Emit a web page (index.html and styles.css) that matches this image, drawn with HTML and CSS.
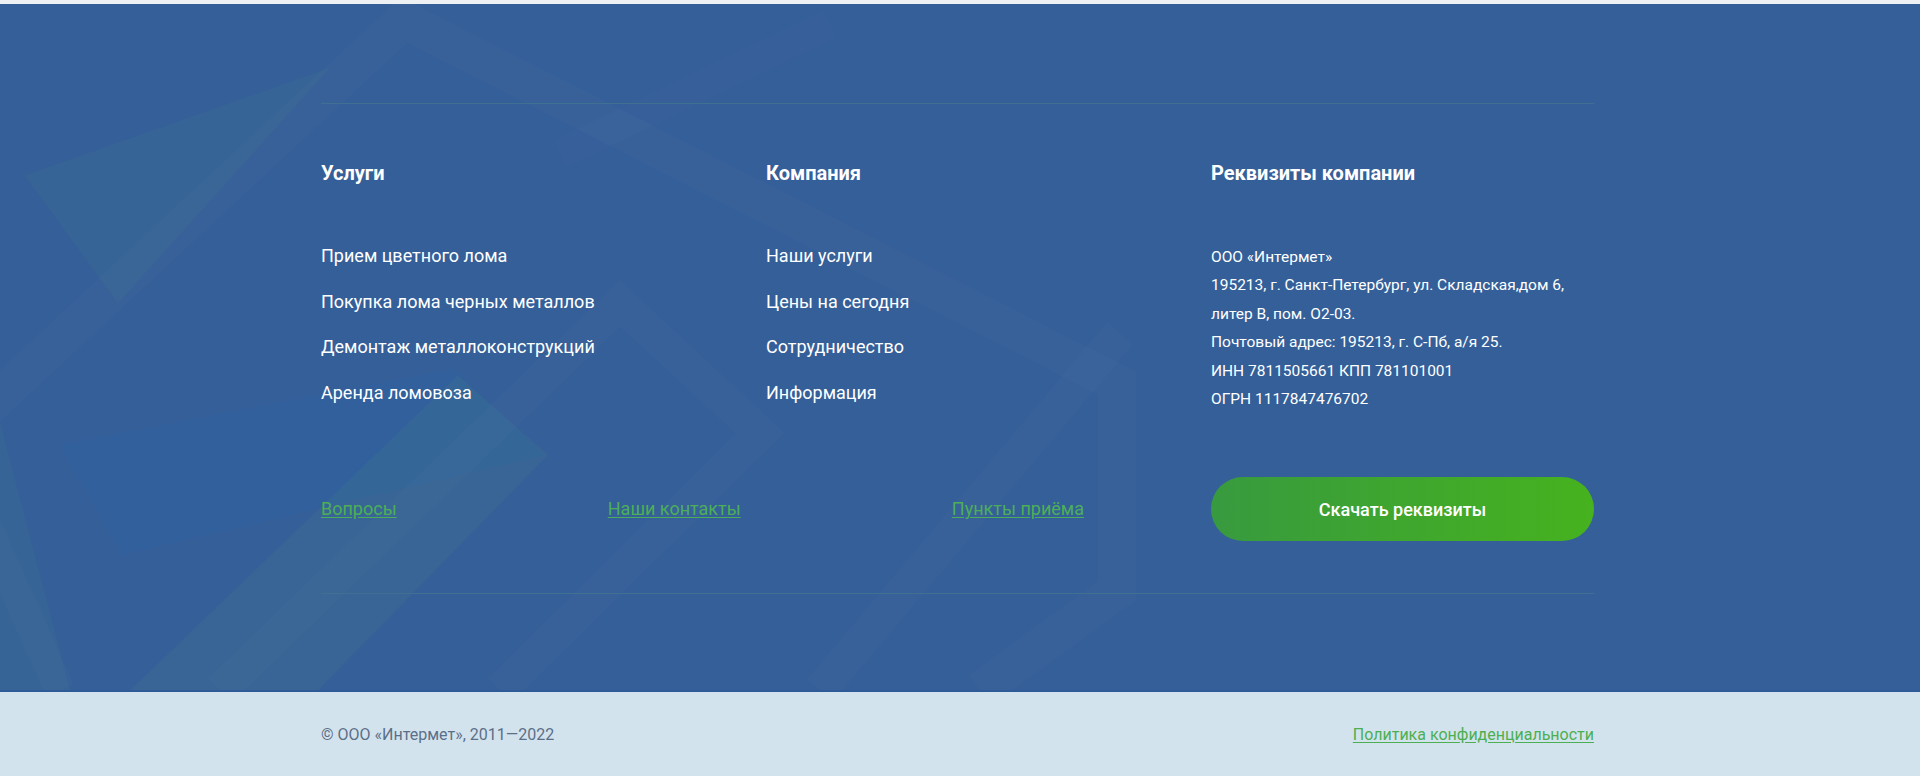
FILE: index.html
```html
<!DOCTYPE html>
<html lang="ru">
<head>
<meta charset="utf-8">
<title>Интермет — футер</title>
<link rel="stylesheet" href="styles.css">
</head>
<body>
<div class="top-strip"></div>
<footer class="footer">
  <div class="footer-main">
    <svg class="footer-bg" viewBox="0 0 1920 688" preserveAspectRatio="none" aria-hidden="true">
      <polygon points="0,688 0,420 70,688" fill="#3f7390" opacity="0.25"/>
      <polygon points="25,172 330,64 118,300" fill="#3f7a8c" opacity="0.2"/>
      <polygon points="60,442 452,366 545,452 122,552" fill="#2a64a8" opacity="0.3"/>
      <polygon points="130,688 318,688 548,452 458,372" fill="#3f7390" opacity="0.3"/>
      <polyline points="-40,430 404,16 1117,380 1117,588 980,688" fill="none" stroke="#ffffff" stroke-opacity="0.015" stroke-width="38"/>
      <polyline points="60,688 -60,420" fill="none" stroke="#ffffff" stroke-opacity="0.015" stroke-width="30"/>
      <polyline points="220,688 620,300 760,430 500,688" fill="none" stroke="#ffffff" stroke-opacity="0.015" stroke-width="34"/>
      <polyline points="820,688 1120,330" fill="none" stroke="#ffffff" stroke-opacity="0.015" stroke-width="34"/>
      <polyline points="560,150 830,20" fill="none" stroke="#ffffff" stroke-opacity="0.012" stroke-width="30"/>
    </svg>
    <div class="container">
      <div class="rule"></div>
      <div class="cols">
        <div class="col">
          <h3 class="col-title">Услуги</h3>
          <ul class="menu">
            <li><a href="#">Прием цветного лома</a></li>
            <li><a href="#">Покупка лома черных металлов</a></li>
            <li><a href="#">Демонтаж металлоконструкций</a></li>
            <li><a href="#">Аренда ломовоза</a></li>
          </ul>
        </div>
        <div class="col">
          <h3 class="col-title">Компания</h3>
          <ul class="menu">
            <li><a href="#">Наши услуги</a></li>
            <li><a href="#">Цены на сегодня</a></li>
            <li><a href="#">Сотрудничество</a></li>
            <li><a href="#">Информация</a></li>
          </ul>
        </div>
        <div class="col">
          <h3 class="col-title">Реквизиты компании</h3>
          <div class="req">
            <p>ООО «Интермет»</p>
            <p>195213, г. Санкт-Петербург, ул. Складская,дом 6,</p>
            <p>литер В, пом. О2-03.</p>
            <p>Почтовый адрес: 195213, г. С-Пб, а/я 25.</p>
            <p>ИНН 7811505661 КПП 781101001</p>
            <p>ОГРН 1117847476702</p>
          </div>
        </div>
      </div>
      <div class="actions">
        <nav class="quick-links">
          <a href="#">Вопросы</a>
          <a href="#">Наши контакты</a>
          <a href="#">Пункты приёма</a>
        </nav>
        <a class="btn" href="#">Скачать реквизиты</a>
      </div>
      <div class="rule"></div>
    </div>
  </div>
  <div class="footer-bottom">
    <div class="container bottom-row">
      <span class="copy">© ООО «Интермет», 2011—2022</span>
      <a class="privacy" href="#">Политика конфиденциальности</a>
    </div>
  </div>
</footer>
</body>
</html>
```
FILE: styles.css
```css
* { box-sizing: border-box; }

html, body {
  margin: 0;
  padding: 0;
}

body {
  background: #d3e3ee;
  font-family: Roboto, "Liberation Sans", Arial, sans-serif;
}

.top-strip {
  height: 4px;
  background: #eef1f4;
}

.footer-main {
  position: relative;
  overflow: hidden;
  background: #355f99;
  padding-top: 99px;
  padding-bottom: 96px;
  border-bottom: 2px solid #2e5b98;
}

.footer-bg {
  position: absolute;
  left: 0;
  top: 0;
  width: 100%;
  height: 100%;
  pointer-events: none;
}

.container {
  position: relative;
  width: 1273px;
  margin-left: calc(50% - 639px);
}

.rule {
  height: 1px;
  background: #3f7091;
}

.cols {
  display: grid;
  grid-template-columns: 383px 383px 383px;
  column-gap: 62px;
  margin-top: 57px;
}

.col-title {
  margin: 0;
  font-size: 20px;
  line-height: 24px;
  font-weight: 700;
  color: #ffffff;
}

.menu {
  list-style: none;
  margin: 58px 0 0;
  padding: 0;
  display: flex;
  flex-direction: column;
  gap: 19.5px;
}

.menu a {
  display: block;
  color: #ffffff;
  text-decoration: none;
  font-size: 18px;
  line-height: 26px;
}

.req {
  margin-top: 58px;
  color: #ffffff;
  font-size: 15.5px;
  line-height: 28.4px;
}

.req p {
  margin: 0;
  white-space: nowrap;
}

.actions {
  display: flex;
  align-items: center;
  justify-content: space-between;
  margin-top: 64px;
  margin-bottom: 52px;
}

.quick-links {
  width: 763px;
  display: flex;
  justify-content: space-between;
}

.quick-links a {
  color: #4caf58;
  font-size: 18px;
  line-height: 24px;
  text-decoration: underline;
  text-underline-offset: 2px;
}

.btn {
  width: 383px;
  height: 64px;
  border-radius: 32px;
  display: flex;
  align-items: center;
  justify-content: center;
  background: linear-gradient(90deg, #389a3f 0%, #46b21e 100%);
  color: #ffffff;
  font-size: 18px;
  font-weight: 500;
  text-decoration: none;
}

.footer-bottom {
  background: #d3e3ee;
  height: 84px;
  display: flex;
  align-items: center;
}

.bottom-row {
  display: flex;
  justify-content: space-between;
  align-items: center;
}

.copy {
  color: #5c6f88;
  font-size: 16px;
}

.privacy {
  color: #4caf50;
  font-size: 16px;
  text-decoration: underline;
  text-underline-offset: 2px;
}
```
